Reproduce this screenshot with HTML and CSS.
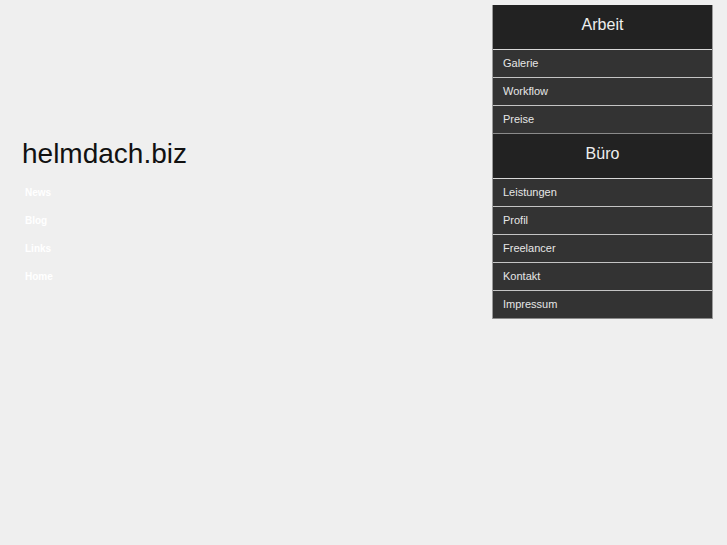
FILE: index.html
```html
<!DOCTYPE html>
<html lang="de">
<head>
<meta charset="utf-8">
<title>helmdach.biz</title>
<link rel="stylesheet" href="styles.css">
</head>
<body>
<div class="page">
  <div class="main">
    <h1 class="logo">helmdach.biz</h1>
    <ul class="topnav">
      <li><a href="#">News</a></li>
      <li><a href="#">Blog</a></li>
      <li><a href="#">Links</a></li>
      <li><a href="#">Home</a></li>
    </ul>
  </div>
  <aside class="panel">
    <div class="group-title">Arbeit</div>
    <ul class="group">
      <li><a href="#">Galerie</a></li>
      <li><a href="#">Workflow</a></li>
      <li><a href="#">Preise</a></li>
    </ul>
    <div class="group-title">Büro</div>
    <ul class="group">
      <li><a href="#">Leistungen</a></li>
      <li><a href="#">Profil</a></li>
      <li><a href="#">Freelancer</a></li>
      <li><a href="#">Kontakt</a></li>
      <li><a href="#">Impressum</a></li>
    </ul>
  </aside>
</div>
</body>
</html>
```
FILE: styles.css
```css
html, body {
  margin: 0;
  padding: 0;
  background: #efefef;
  font-family: "Liberation Sans", Arial, sans-serif;
}
.page {
  display: flex;
  align-items: flex-start;
  min-height: 545px;
}
.main {
  flex: 1;
  padding: 138px 0 0 22px;
}
.logo {
  margin: 0;
  font-size: 28px;
  line-height: 32px;
  font-weight: normal;
  color: #111;
}
.topnav {
  list-style: none;
  margin: 9px 0 0 3px;
  padding: 0;
}
.topnav li {
  line-height: 28px;
  font-size: 10px;
  font-weight: bold;
}
.topnav a {
  color: #fff;
  text-decoration: none;
}
.panel {
  width: 219px;
  margin: 5px 14px 0 0;
  border-left: 1px solid #9a9a9a;
  border-right: 1px solid #9a9a9a;
  background: #333;
}
.group-title {
  height: 44px;
  padding-top: 10px;
  box-sizing: border-box;
  line-height: 20px;
  text-align: center;
  font-size: 16px;
  color: #eee;
  background: #222;
}
.group {
  list-style: none;
  margin: 0;
  padding: 0;
  border-bottom: 1px solid #8a8a8a;
}
.group li {
  border-top: 1px solid #c4c4c4;
  height: 28px;
  box-sizing: border-box;
}
.group li:first-child {
  border-top-color: #d8d8d8;
}
.group a {
  display: block;
  padding: 1px 0 0 10px;
  line-height: 25px;
  font-size: 11px;
  color: #e6e6e6;
  text-decoration: none;
}
```
